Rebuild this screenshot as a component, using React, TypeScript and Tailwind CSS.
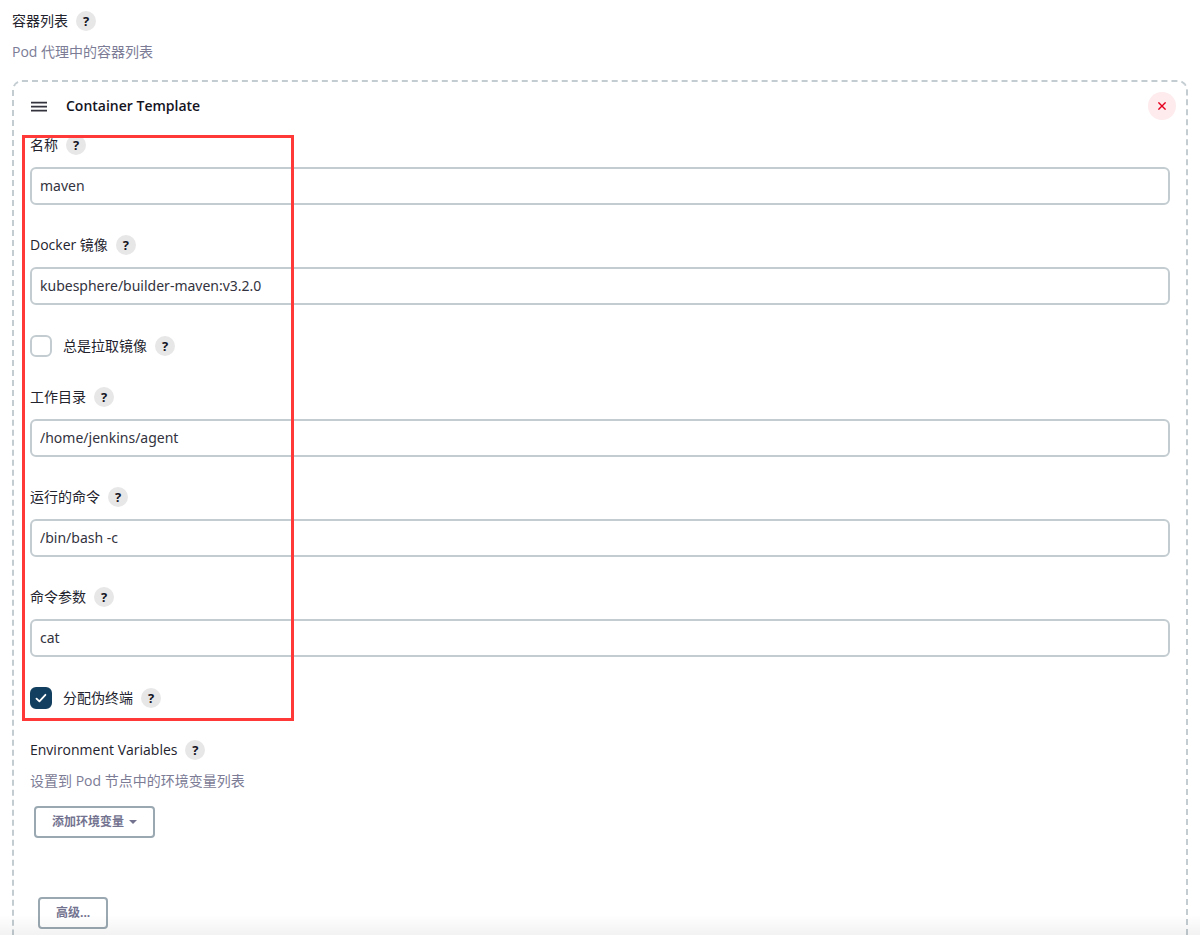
import { useState } from "react";
import type { ReactNode } from "react";

const fields = {
  name: { label: "名称", value: "maven" },
  image: { label: "Docker 镜像", value: "kubesphere/builder-maven:v3.2.0" },
  workingDir: { label: "工作目录", value: "/home/jenkins/agent" },
  command: { label: "运行的命令", value: "/bin/bash -c" },
  args: { label: "命令参数", value: "cat" },
};

function HelpButton({ topic }: { topic: string }) {
  return (
    <button
      type="button"
      title={`Help for feature: ${topic}`}
      className="flex size-5 shrink-0 items-center justify-center rounded-full bg-[#e7e7e8] text-[13px] leading-5 font-bold text-[#14141f]"
    >
      ?
    </button>
  );
}

function TextField({ id }: { id: keyof typeof fields }) {
  const { label, value } = fields[id];

  return (
    <div>
      <div className="mb-3 flex h-5 items-center gap-2">
        <label htmlFor={id}>{label}</label>
        <HelpButton topic={label} />
      </div>
      <input
        id={id}
        name={id}
        type="text"
        defaultValue={value}
        className="block h-[38px] w-full rounded-md border-2 border-[#c3ccd1] bg-white px-2 pb-0.5 font-['Noto_Sans','Noto_Sans_CJK_SC',sans-serif] text-sm text-[#333340] outline-none focus:border-[#0b6aa2]"
      />
    </div>
  );
}

function CheckField({
  id,
  label,
  defaultChecked = false,
}: {
  id: string;
  label: string;
  defaultChecked?: boolean;
}) {
  const [checked, setChecked] = useState(defaultChecked);

  return (
    <div className="flex items-center gap-2">
      <label htmlFor={id} className="flex items-center gap-[11px]">
        <span className="grid size-[22px]">
          <input
            id={id}
            name={id}
            type="checkbox"
            checked={checked}
            onChange={(event) => setChecked(event.target.checked)}
            className="col-start-1 row-start-1 size-[22px] appearance-none rounded-md border-2 border-[#c3ccd1] bg-white checked:border-[#123f5f] checked:bg-[#123f5f]"
          />
          {checked && (
            <svg
              viewBox="0 0 22 22"
              className="pointer-events-none col-start-1 row-start-1 size-[22px]"
              fill="none"
              stroke="white"
              strokeWidth="1.8"
              strokeLinecap="round"
              strokeLinejoin="round"
            >
              <path d="M6.5 11.6 9.4 14.4 15.4 7.8" />
            </svg>
          )}
        </span>
        {label}
      </label>
      <HelpButton topic={label} />
    </div>
  );
}

function OutlineButton({ children }: { children: ReactNode }) {
  return (
    <button
      type="button"
      className="flex h-8 items-center gap-[5px] rounded-[4px] border-2 border-[#9aa8b2] bg-white px-4 text-xs font-bold text-[#737390]"
    >
      {children}
    </button>
  );
}

export default function App() {
  return (
    <main className="flex min-h-screen flex-col bg-white px-3 pt-[11px] font-['Open_Sans','Noto_Sans_CJK_SC',sans-serif] text-sm leading-5 text-[#23232e]">
      <div className="flex h-5 items-center gap-2">
        <h2>容器列表</h2>
        <HelpButton topic="容器列表" />
      </div>
      <p className="mt-[11px] text-[#7c7c96]">Pod 代理中的容器列表</p>

      <section className="mt-[18px] grow rounded-t-[10px] border-2 border-b-0 border-dashed border-[#c3ccd1] pt-[10px]">
        <header className="flex h-7 items-center pr-[10px] pl-[17px]">
          <svg
            viewBox="0 0 16 12"
            className="h-3 w-4 text-[#33333d]"
            stroke="currentColor"
            strokeWidth="1.7"
          >
            <path d="M0 2.7h16M0 6.7h16M0 10.7h16" />
          </svg>
          <h3 className="ml-[19px] font-semibold text-[#14141f]">
            Container Template
          </h3>
          <button
            type="button"
            aria-label="Delete"
            className="ml-auto flex size-7 items-center justify-center rounded-full bg-[#fdebed]"
          >
            <svg
              viewBox="0 0 8 8"
              className="size-2"
              stroke="#e6001f"
              strokeWidth="1.4"
            >
              <path d="M.4.4 7.6 7.6M7.6.4.4 7.6" />
            </svg>
          </button>
        </header>

        <div className="px-4 pt-[15px] pb-[6px]">
          <div className="relative flex flex-col gap-[30px]">
            <TextField id="name" />
            <TextField id="image" />
            <CheckField id="alwaysPull" label="总是拉取镜像" />
            <TextField id="workingDir" />
            <TextField id="command" />
            <TextField id="args" />
            <CheckField id="tty" label="分配伪终端" defaultChecked />

            {/* Highlight around the settings to fill in */}
            <div className="pointer-events-none absolute top-0 -bottom-3 -left-2 w-[272px] border-3 border-[#ff3838]" />
          </div>

          <div className="mt-[31px] flex h-5 items-center gap-2">
            <h4>Environment Variables</h4>
            <HelpButton topic="Environment Variables" />
          </div>
          <p className="mt-[11px] text-[#7c7c96]">
            设置到 Pod 节点中的环境变量列表
          </p>
          <div className="mt-[15px] flex pl-1">
            <OutlineButton>
              添加环境变量
              <svg viewBox="0 0 8 4" className="h-1 w-2" fill="currentColor">
                <path d="M0 0h8L4 4z" />
              </svg>
            </OutlineButton>
          </div>
          <div className="mt-[59px] flex pl-2">
            <OutlineButton>高级...</OutlineButton>
          </div>
        </div>
      </section>

      <div className="pointer-events-none fixed inset-x-0 bottom-0 h-5 bg-linear-to-b from-transparent to-black/5" />
    </main>
  );
}
